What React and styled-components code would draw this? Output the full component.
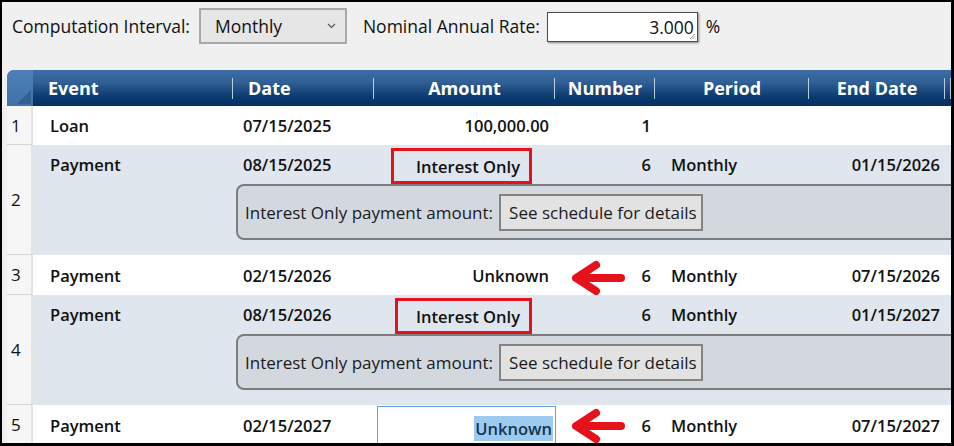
import React from "react";
import styled, { createGlobalStyle } from "styled-components";

const Global = createGlobalStyle`
  html, body { margin: 0; padding: 0; background: #000; }
  body { font-family: "Open Sans", "Noto Sans", sans-serif; }
`;

const COLS = "26px 200px 141px 181px 100px 154px 136px 1fr";

const Frame = styled.div`
  width: 954px;
  height: 446px;
  box-sizing: border-box;
  border: solid #000;
  border-width: 2px 3px 3px 2px;
  background: #f0f0f0;
  overflow: hidden;
  display: flex;
  flex-direction: column;
`;

const Toolbar = styled.div`
  height: 68px;
  flex-shrink: 0;
  box-sizing: border-box;
  padding: 6px 0 0 10px;
  display: flex;
  align-items: flex-start;
  font-size: 17.5px;
  color: #111;
`;

const Label = styled.span`
  line-height: 36px;
  white-space: nowrap;
  margin-right: ${(p) => p.$gap || 9}px;
`;

const Select = styled.div`
  width: 148px;
  height: 36px;
  flex-shrink: 0;
  box-sizing: border-box;
  border: 2px solid #a9a9a9;
  background: #e6e6e6;
  display: flex;
  align-items: center;
  justify-content: space-between;
  padding: 0 9px 0 14px;
  margin-right: 16px;
`;

const RateBox = styled.div`
  position: relative;
  width: 151px;
  height: 30px;
  flex-shrink: 0;
  margin-top: 4px;
  box-sizing: border-box;
  border: 1px solid #4d4d4d;
  box-shadow: 1px 1px 2px rgba(0, 0, 0, 0.45);
  background: #fff;
  display: flex;
  align-items: center;
  justify-content: flex-end;
  padding-right: 3px;
`;

const Grip = styled.svg`
  position: absolute;
  right: 1px;
  bottom: 1px;
`;

const Percent = styled.span`
  line-height: 36px;
  margin-left: 8px;
`;

const Grid = styled.div`
  margin-left: 5px;
  flex: 1;
  display: flex;
  flex-direction: column;
`;

const Header = styled.div`
  display: grid;
  grid-template-columns: ${COLS};
  height: 36px;
  border-top-left-radius: 7px;
  overflow: hidden;
  background: linear-gradient(#3e6fa4 0%, #2f5f95 35%, #0e3c70 72%, #043061 100%);
  color: #fff;
  font-weight: 700;
  font-size: 18px;
`;

const Corner = styled.div`
  position: relative;
  background: linear-gradient(#4d80b6, #3f72a8);
  &::after {
    content: "";
    position: absolute;
    right: 2px;
    bottom: 2px;
    border-style: solid;
    border-width: 0 0 14px 14px;
    border-color: transparent transparent #33608f transparent;
  }
`;

const HeadCell = styled.div`
  position: relative;
  display: flex;
  align-items: center;
  justify-content: ${(p) => (p.$left ? "flex-start" : "center")};
  padding-left: ${(p) => (p.$left ? 15 : 0)}px;
  &::after {
    content: "";
    position: absolute;
    right: 0;
    top: 8px;
    bottom: 7px;
    width: 1px;
    background: #b9cbe0;
  }
`;

const Row = styled.div`
  display: grid;
  grid-template-columns: ${COLS};
  grid-template-rows: ${(p) => (p.$detail ? "39px 56px 15px" : p.$h ? `${p.$h}px` : "39px")};
  background: ${(p) => (p.$alt ? "#dfe6ee" : "#fff")};
  font-size: 16.5px;
  font-weight: 600;
  color: #111;
`;

const RowNum = styled.div`
  grid-row: 1 / -1;
  grid-column: 1;
  background: #f6f6f6;
  border-right: 2px solid #e4e4e4;
  border-bottom: 1px solid #d6d6d6;
  display: flex;
  align-items: center;
  padding-left: 4px;
  font-weight: 400;
  font-size: 17px;
`;

const Cell = styled.div`
  grid-row: 1;
  display: flex;
  align-items: center;
  justify-content: ${(p) => (p.$right ? "flex-end" : "flex-start")};
  padding: 0 ${(p) => p.$pr || 0}px 0 ${(p) => p.$pl || 0}px;
  position: relative;
  white-space: nowrap;
`;

const Marked = styled.span`
  height: 36px;
  box-sizing: border-box;
  border: 3px solid #e5121b;
  display: flex;
  align-items: center;
  padding: 0 9px 0 ${(p) => p.$pl}px;
  margin-right: 17px;
  align-self: flex-start;
  margin-top: 3px;
`;

const Editor = styled.div`
  position: absolute;
  left: 3px;
  right: -1px;
  top: 1px;
  bottom: -6px;
  border: 1px solid #62a0dd;
  background: #fff;
  display: flex;
  align-items: center;
  justify-content: flex-end;
  padding-right: 2px;
`;

const Selected = styled.span`
  background: #9dcbf0;
  color: #123456;
  padding: 1px 1px;
`;

const Arrow = styled.svg`
  position: absolute;
  left: ${(p) => p.$x}px;
  top: ${(p) => p.$y}px;
`;

const Panel = styled.div`
  grid-row: 2;
  grid-column: 3 / -1;
  margin-left: 3px;
  margin-right: -20px;
  border: 2px solid #7c7c7c;
  border-radius: 8px;
  background: #d3d8df;
  display: flex;
  align-items: center;
  padding-left: 7px;
  font-weight: 400;
  font-size: 17px;
  color: #1a1a1a;
  white-space: nowrap;
`;

const ReadBox = styled.div`
  margin-left: 6px;
  width: 204px;
  height: 37px;
  flex-shrink: 0;
  box-sizing: border-box;
  border: 2px solid #838383;
  background: #e2e2e2;
  display: flex;
  align-items: center;
  padding-left: 8px;
`;

function RedArrow({ x, y }) {
  return (
    <Arrow $x={x} $y={y} width="56" height="36" viewBox="0 0 56 36">
      <g stroke="#e5121b" strokeWidth="8" strokeLinecap="round" strokeLinejoin="round" fill="none">
        <path d="M51 18 H8" />
        <path d="M26 5 L6 18 L26 31" />
      </g>
    </Arrow>
  );
}

const rows = [
  { n: 1, event: "Loan", date: "07/15/2025", amount: "100,000.00", number: "1" },
  { n: 2, event: "Payment", date: "08/15/2025", interest: 22, number: "6", period: "Monthly", end: "01/15/2026", alt: true },
  { n: 3, event: "Payment", date: "02/15/2026", amount: "Unknown", arrow: true, number: "6", period: "Monthly", end: "07/15/2026", h: 40 },
  { n: 4, event: "Payment", date: "08/15/2026", interest: 18, number: "6", period: "Monthly", end: "01/15/2027", alt: true },
  { n: 5, event: "Payment", date: "02/15/2027", amount: "Unknown", editing: true, arrow: true, number: "6", period: "Monthly", end: "07/15/2027", h: 40 },
];

export default function App() {
  return (
    <>
      <Global />
      <Frame>
        <Toolbar>
          <Label>Computation Interval:</Label>
          <Select>
            <span>Monthly</span>
            <svg width="9" height="6" viewBox="0 0 9 6">
              <path d="M1 1 L4.5 4.5 L8 1" stroke="#555" strokeWidth="1.2" fill="none" />
            </svg>
          </Select>
          <Label $gap={7}>Nominal Annual Rate:</Label>
          <RateBox>
            3.000
            <Grip width="8" height="8" viewBox="0 0 8 8">
              <path d="M7 2 L2 7 M7 4.5 L4.5 7 M7 6.5 L6.5 7" stroke="#999" strokeWidth="1" />
            </Grip>
          </RateBox>
          <Percent>%</Percent>
        </Toolbar>
        <Grid>
          <Header>
            <Corner />
            <HeadCell $left>Event</HeadCell>
            <HeadCell $left>Date</HeadCell>
            <HeadCell>Amount</HeadCell>
            <HeadCell>Number</HeadCell>
            <HeadCell>Period</HeadCell>
            <HeadCell>End Date</HeadCell>
            <HeadCell />
          </Header>
          {rows.map((r) => (
            <Row key={r.n} $alt={r.alt} $detail={!!r.interest} $h={r.h}>
              <RowNum>{r.n}</RowNum>
              <Cell $pl={17}>{r.event}</Cell>
              <Cell $pl={10}>{r.date}</Cell>
              <Cell $right $pr={6}>
                {r.interest ? (
                  <Marked $pl={r.interest}>Interest Only</Marked>
                ) : r.editing ? (
                  <Editor>
                    <Selected>{r.amount}</Selected>
                  </Editor>
                ) : (
                  r.amount
                )}
              </Cell>
              <Cell $right $pr={4}>
                {r.arrow && <RedArrow x={15} y={r.editing ? 3 : 5} />}
                {r.number}
              </Cell>
              <Cell $pl={16}>{r.period}</Cell>
              <Cell $right $pr={5}>{r.end}</Cell>
              <Cell />
              {r.interest && (
                <Panel>
                  Interest Only payment amount:
                  <ReadBox>See schedule for details</ReadBox>
                </Panel>
              )}
            </Row>
          ))}
        </Grid>
      </Frame>
    </>
  );
}
